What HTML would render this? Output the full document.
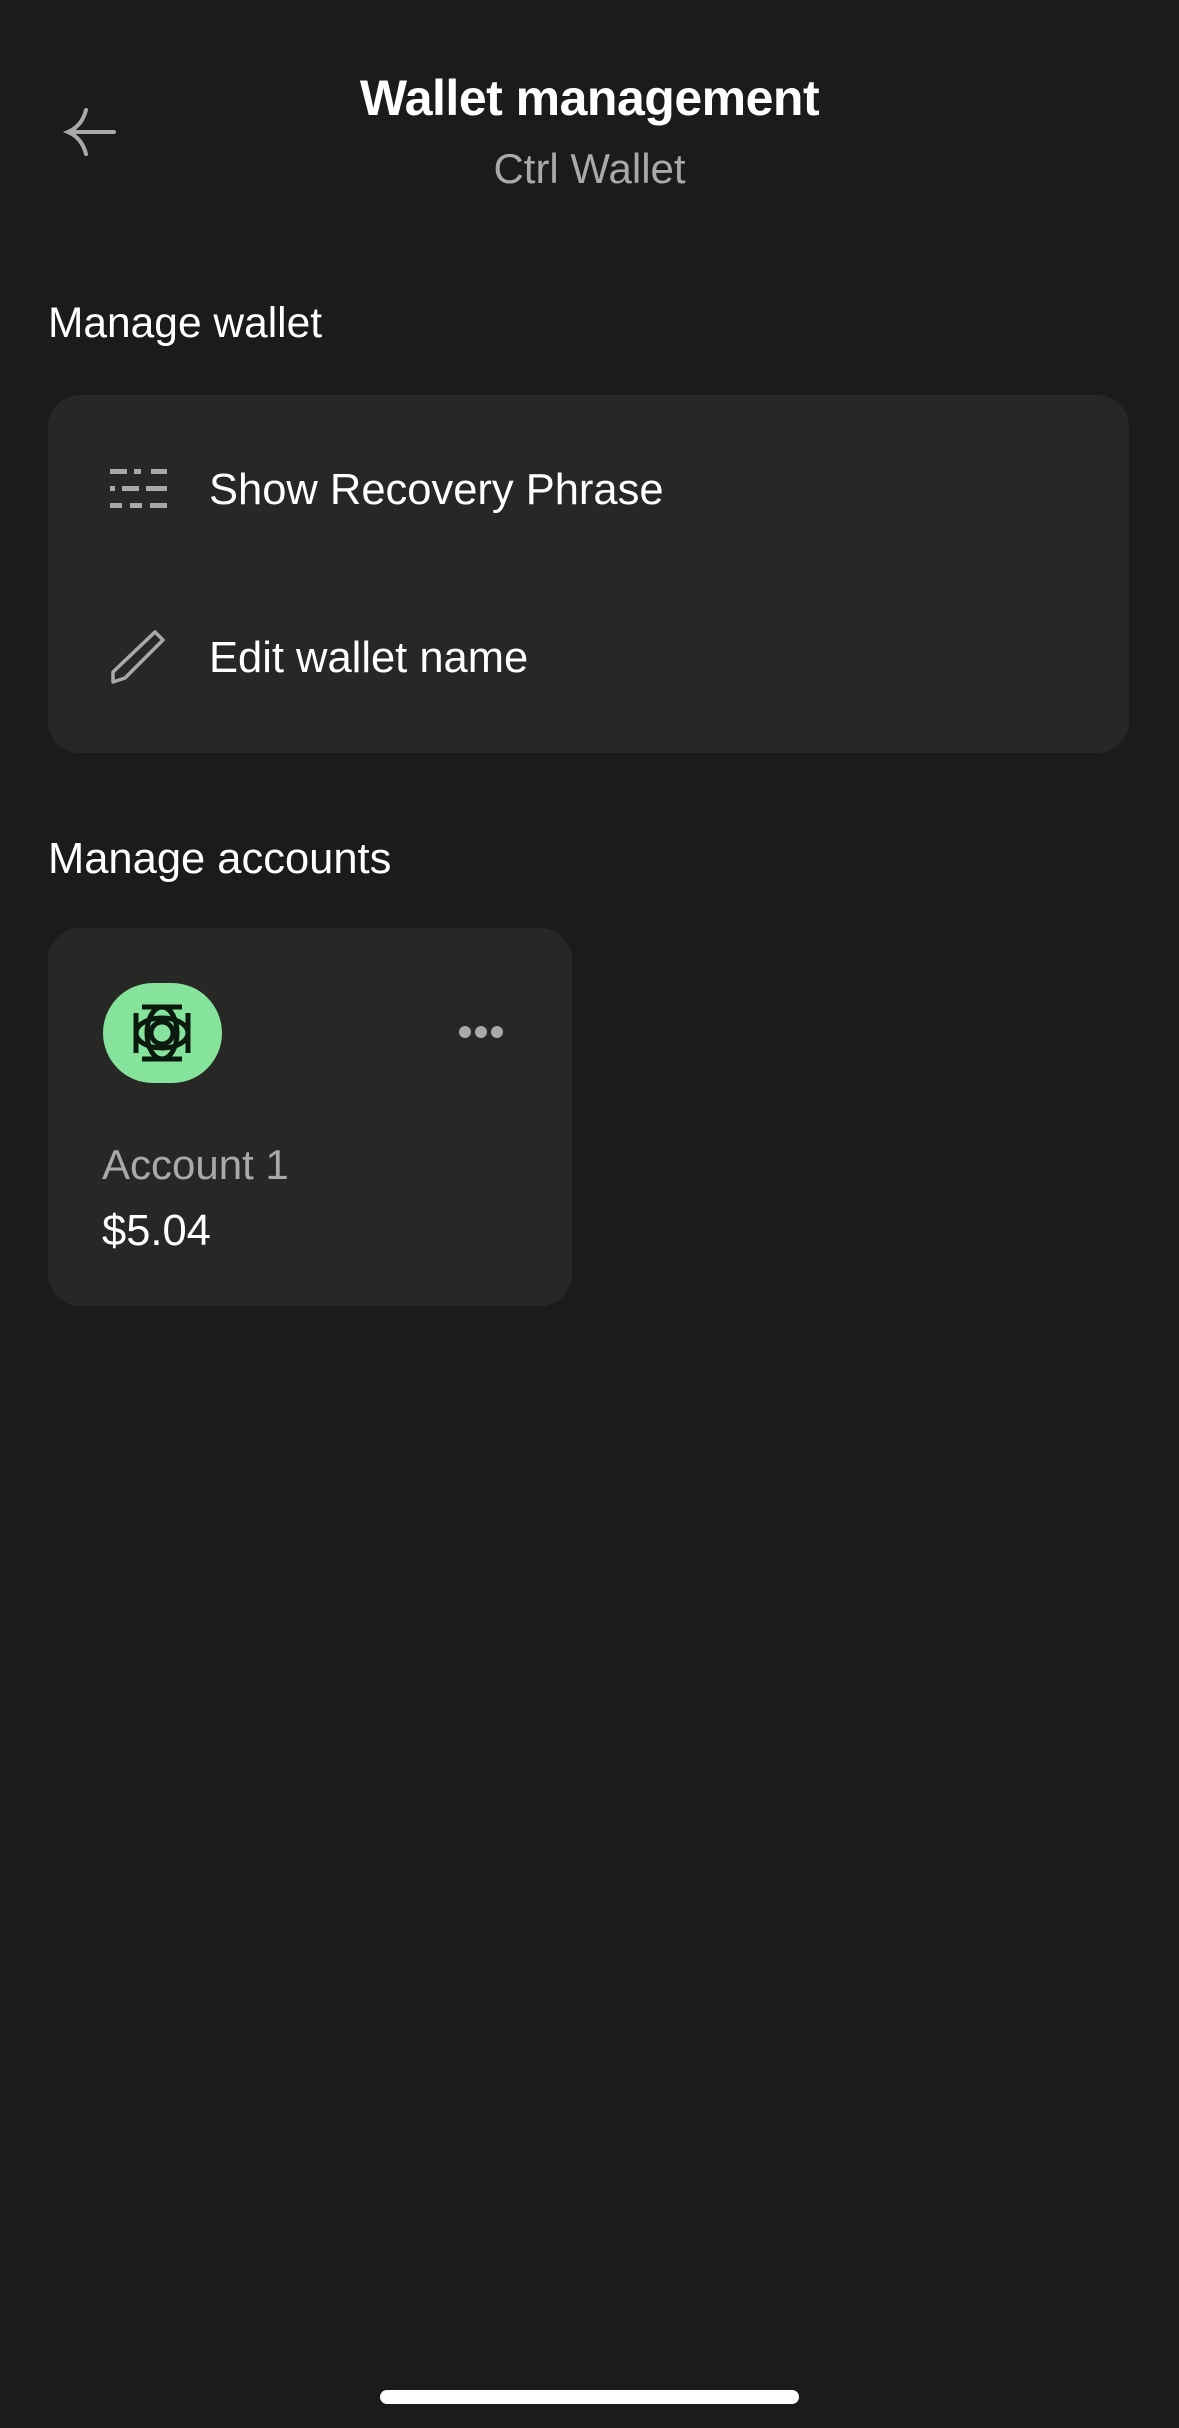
<!DOCTYPE html>
<html><head><meta charset="utf-8"><style>
html,body{margin:0;padding:0}
body{width:1179px;height:2428px;background:#1b1c1a;position:relative;overflow:hidden;font-family:"Liberation Sans",sans-serif;color:#fff}
.a{position:absolute;white-space:nowrap}
.card{position:absolute;background:#272826;border-radius:32px}
</style></head><body>
<div class="a" style="left:0;width:1179px;text-align:center;top:68px;font-size:50px;font-weight:bold;letter-spacing:-0.5px;line-height:60px">Wallet management</div>
<div class="a" style="left:0;width:1179px;text-align:center;top:144px;font-size:42px;color:#a9aaa8;line-height:50px">Ctrl Wallet</div>
<svg class="a" style="left:60px;top:104px" width="60" height="56" viewBox="0 0 60 56"><path d="M54 28 H8 M26 6 Q22 22 8 28 Q22 34 26 50" fill="none" stroke="#a9aaa8" stroke-width="4" stroke-linecap="round"/></svg>
<div class="a" style="left:48px;top:298px;font-size:42.5px;line-height:52px">Manage wallet</div>
<div class="card" style="left:48px;top:395px;width:1081px;height:358px"></div>
<svg class="a" style="left:110px;top:469px" width="58" height="40" viewBox="0 0 58 40"><g fill="#a9aaa8"><rect x="0" y="0" width="17" height="5"/><rect x="24" y="0" width="7" height="5"/><rect x="41" y="0" width="16" height="5"/><rect x="0" y="17" width="5" height="5"/><rect x="12" y="17" width="17" height="5"/><rect x="36" y="17" width="21" height="5"/><rect x="0" y="34" width="12" height="5"/><rect x="20" y="34" width="12" height="5"/><rect x="40" y="34" width="17" height="5"/></g></svg>
<div class="a" style="left:209px;top:464px;font-size:43.5px;line-height:52px">Show Recovery Phrase</div>
<svg class="a" style="left:108px;top:628px" width="60" height="58" viewBox="0 0 60 58"><path d="M47 4 L55 12 L17 50 L5 54 L5 44 Z" fill="none" stroke="#a9aaa8" stroke-width="3.5" stroke-linejoin="round"/></svg>
<div class="a" style="left:209px;top:632px;font-size:43.5px;line-height:52px">Edit wallet name</div>
<div class="a" style="left:48px;top:833px;font-size:43.5px;line-height:52px">Manage accounts</div>
<div class="card" style="left:48px;top:928px;width:524px;height:378px"></div>
<div class="a" style="left:103px;top:983px;width:119px;height:100px;border-radius:50px;background:#86e39b"></div>
<svg class="a" style="left:130px;top:1001px" width="64" height="64" viewBox="0 0 64 64"><g fill="none" stroke="#0b1a0e" stroke-width="5"><circle cx="32" cy="32" r="11"/><ellipse cx="32" cy="32" rx="26" ry="15"/><ellipse cx="32" cy="32" rx="15" ry="26"/><path d="M6 12 V52 M58 12 V52 M12 6 H52 M12 58 H52"/></g></svg>
<svg class="a" style="left:458px;top:1022px" width="48" height="20" viewBox="0 0 48 20"><g fill="#a9aaa8"><circle cx="7" cy="10" r="6"/><circle cx="23" cy="10" r="6"/><circle cx="39" cy="10" r="6"/></g></svg>
<div class="a" style="left:102px;top:1139px;font-size:42px;color:#a9aaa8;line-height:52px">Account 1</div>
<div class="a" style="left:102px;top:1205px;font-size:43.5px;line-height:52px">$5.04</div>
<div class="a" style="left:380px;top:2390px;width:419px;height:14px;border-radius:7px;background:#fff"></div>
</body></html>
